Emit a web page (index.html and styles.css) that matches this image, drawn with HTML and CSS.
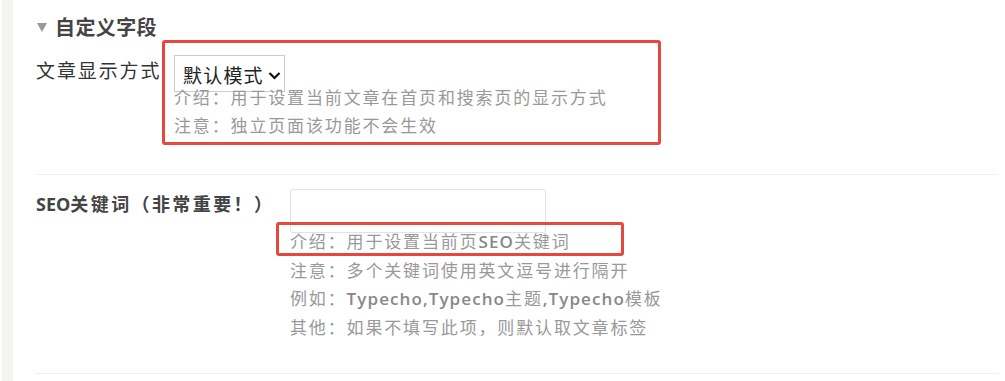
FILE: index.html
```html
<!DOCTYPE html>
<html lang="zh-CN">
<head>
	<meta charset="UTF-8">
	<title>自定义字段</title>
	<link rel="stylesheet" href="styles.css">
</head>
<body>
	<div class="page">
		<div class="rail"></div>
		<div class="panel">
			<h3 class="fields-title"><span class="caret"></span>自定义字段</h3>

			<div class="field">
				<label class="field-label label-mode">文章显示方式</label>
				<div class="control">
					<div class="select">
						<span>默认模式</span>
						<svg width="13" height="9" viewBox="0 0 13 9"><path d="M1.5 2 L6.5 7 L11.5 2" fill="none" stroke="#111" stroke-width="2.2"/></svg>
					</div>
					<p class="desc">介绍：用于设置当前文章在首页和搜索页的显示方式</p>
					<p class="desc">注意：独立页面该功能不会生效</p>
				</div>
				<div class="mark mark-mode"></div>
			</div>

			<div class="field">
				<label class="field-label label-seo"><span class="latin">SEO</span>关键词（非常重要！）</label>
				<div class="control">
					<input class="text" type="text">
					<p class="desc desc-first">介绍：用于设置当前页<span class="latin">SEO</span>关键词</p>
					<p class="desc">注意：多个关键词使用英文逗号进行隔开</p>
					<p class="desc">例如：<span class="latin">Typecho,Typecho</span>主题<span class="latin">,Typecho</span>模板</p>
					<p class="desc">其他：如果不填写此项，则默认取文章标签</p>
				</div>
				<div class="mark mark-seo"></div>
			</div>
		</div>
	</div>
</body>
</html>
```

FILE: styles.css
```css
body{
	margin: 0;
	background: #fff;
	font-family: "Noto Sans CJK SC", "Open Sans", sans-serif;
	color: #333;
}
.page{
	display: flex;
	height: 381px;
	overflow: hidden;
}
.rail{
	width: 11px;
	margin-left: 2px;
	background: #f4f4f2;
}
.panel{
	flex: 1;
	padding: 12px 7px 0 23px;
}
.fields-title{
	display: flex;
	align-items: center;
	margin: 0 0 15px;
	height: 28px;
	font-size: 20px;
	font-weight: 700;
	letter-spacing: 0.4px;
	color: #444;
}
.caret{
	width: 0;
	height: 0;
	margin: 2px 8px 0 1px;
	border-left: 5px solid transparent;
	border-right: 5px solid transparent;
	border-top: 9px solid #999;
}
.field{
	position: relative;
	display: flex;
	align-items: flex-start;
	padding-bottom: 35px;
	border-bottom: 1px solid #f0f0f0;
}
.field + .field{
	padding-top: 14px;
	padding-bottom: 32px;
}
.field-label{
	flex: none;
	line-height: 28px;
	font-size: 19px;
	letter-spacing: 1.9px;
	color: #333;
}
.label-mode{
	width: 138px;
	margin-top: 1px;
}
.label-seo{
	width: 254px;
	font-size: 18px;
	font-weight: 700;
	letter-spacing: 2.4px;
	color: #444;
}
.latin{
	font-family: "Open Sans", sans-serif;
	font-weight: 600;
	letter-spacing: 1.1px;
}
.label-seo .latin{
	font-weight: 700;
	letter-spacing: 0;
}
.select{
	display: inline-flex;
	align-items: center;
	gap: 4px;
	box-sizing: border-box;
	width: 111px;
	height: 37px;
	padding: 2px 0 0 8px;
	border: 1px solid #ccc;
	font-size: 19px;
	letter-spacing: 1.2px;
	color: #222;
	background: #fff;
}
.select svg{
	margin-top: 2px;
}
.text{
	display: block;
	box-sizing: border-box;
	width: 256px;
	height: 44px;
	margin: 0;
	border: 1px solid #e2e2e2;
	border-radius: 3px;
	background: #fff;
}
.desc{
	margin: 0;
	line-height: 28px;
	font-size: 17px;
	letter-spacing: 1.85px;
	color: #999;
}
.select + .desc{
	margin-top: -9px;
}
.desc-first{
	margin-top: -6px;
}
.desc .latin{
	color: #888;
}
.mark{
	position: absolute;
	box-sizing: border-box;
	border: 3px solid #e5483f;
	border-radius: 3px;
}
.mark-mode{
	left: 126px;
	top: -15px;
	width: 499px;
	height: 105px;
}
.mark-seo{
	left: 240px;
	top: 47px;
	width: 348px;
	height: 34px;
}
```
